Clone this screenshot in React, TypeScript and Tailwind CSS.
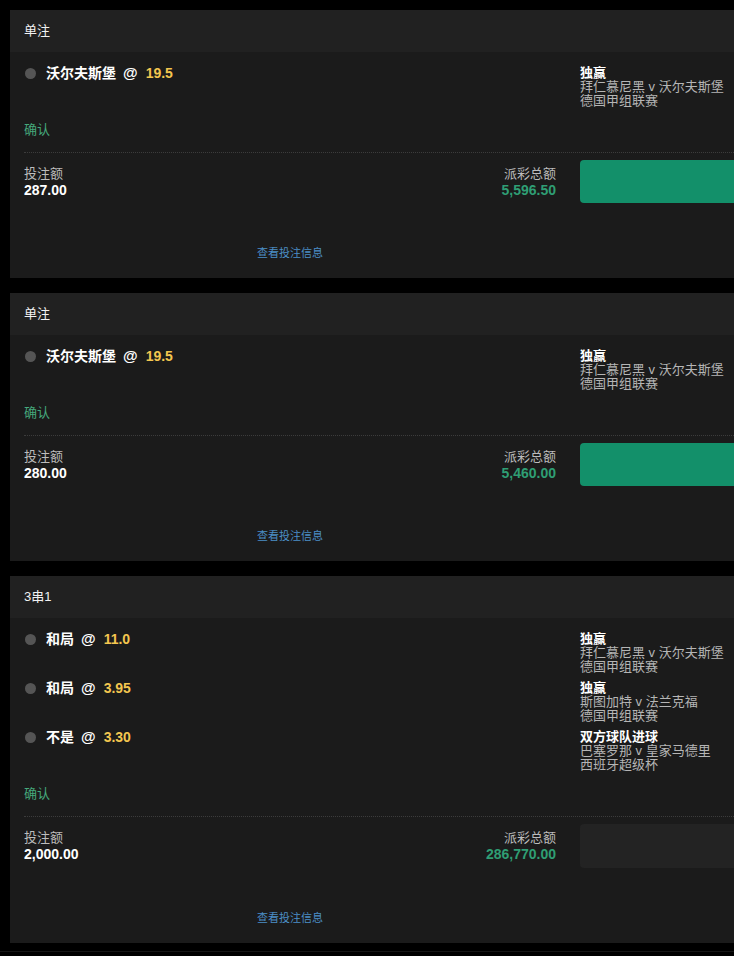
import React from "react";

type Selection = {
  name: string;
  odds: string;
  market: string;
  event: string;
  league: string;
};

type Bet = {
  title: string;
  selections: Selection[];
  stake: string;
  payout: string;
  active: boolean;
};

const bets: Bet[] = [
  {
    title: "单注",
    selections: [
      { name: "沃尔夫斯堡", odds: "19.5", market: "独赢", event: "拜仁慕尼黑 v 沃尔夫斯堡", league: "德国甲组联赛" },
    ],
    stake: "287.00",
    payout: "5,596.50",
    active: true,
  },
  {
    title: "单注",
    selections: [
      { name: "沃尔夫斯堡", odds: "19.5", market: "独赢", event: "拜仁慕尼黑 v 沃尔夫斯堡", league: "德国甲组联赛" },
    ],
    stake: "280.00",
    payout: "5,460.00",
    active: true,
  },
  {
    title: "3串1",
    selections: [
      { name: "和局", odds: "11.0", market: "独赢", event: "拜仁慕尼黑 v 沃尔夫斯堡", league: "德国甲组联赛" },
      { name: "和局", odds: "3.95", market: "独赢", event: "斯图加特 v 法兰克福", league: "德国甲组联赛" },
      { name: "不是", odds: "3.30", market: "双方球队进球", event: "巴塞罗那 v 皇家马德里", league: "西班牙超级杯" },
    ],
    stake: "2,000.00",
    payout: "286,770.00",
    active: false,
  },
];

function BetCard({ bet }: { bet: Bet }) {
  return (
    <div className="w-[800px] bg-[#1b1b1b]">
      <div className="h-[42px] flex items-center px-[14px] bg-[#212121] text-[13px] text-[#f2f2f2]">
        {bet.title}
      </div>
      <div className="px-[14px] pt-[14px]">
        <div className="flex flex-col gap-[7px]">
          {bet.selections.map((s, i) => (
            <div key={i} className="flex items-start">
              <div className="w-[532px] flex items-center h-[14px] text-[14px] font-bold leading-[14px]">
                <span className="ml-[1px] w-[11px] h-[11px] rounded-full bg-[#555555]" />
                <span className="ml-[10px] text-white">{s.name}</span>
                <span className="ml-[7px] text-[15px] text-white">@</span>
                <span className="ml-[8px] text-[#f3c64f]">{s.odds}</span>
              </div>
              <div className="ml-[24px] flex flex-col text-[13px] leading-[14px]">
                <span className="font-bold text-white">{s.market}</span>
                <span className="text-[#b5b5b5]">{s.event}</span>
                <span className="text-[#b5b5b5]">{s.league}</span>
              </div>
            </div>
          ))}
        </div>
        <div className="mt-[14px] pt-[1px] text-[13px] leading-[14px] text-[#45a97c]">确认</div>
        <div className="mt-[15px] border-t border-dotted border-[#3c3c3c]" />
        <div className="pt-[7px] flex items-center">
          <div className="w-[532px] flex justify-between text-[13px] leading-[16px]">
            <div className="flex flex-col">
              <span className="text-[#bdbdbd]">投注额</span>
              <span className="text-[14px] font-bold text-white">{bet.stake}</span>
            </div>
            <div className="flex flex-col items-end">
              <span className="text-[#bdbdbd]">派彩总额</span>
              <span className="text-[14px] font-bold text-[#2f9e74]">{bet.payout}</span>
            </div>
          </div>
          <div
            className={
              bet.active
                ? "ml-[24px] w-[200px] h-[43px] rounded-[4px] bg-[#13906a]"
                : "ml-[24px] w-[200px] h-[44px] rounded-[4px] bg-[#232323]"
            }
          />
        </div>
        <div className="w-[532px] mt-[43px] pb-[18px] text-center text-[11px] leading-[14px] text-[#4b8ec6]">
          查看投注信息
        </div>
      </div>
    </div>
  );
}

export default function App() {
  return (
    <div
      className="w-[734px] h-[956px] overflow-hidden bg-black pt-[10px]"
      style={{ fontFamily: '"Liberation Sans", "Noto Sans CJK SC", sans-serif' }}
    >
      <div className="pl-[10px] flex flex-col gap-[15px]">
        {bets.map((b, i) => (
          <BetCard key={i} bet={b} />
        ))}
      </div>
      <div className="mt-[8px] h-[1px] bg-[#161616]" />
    </div>
  );
}
